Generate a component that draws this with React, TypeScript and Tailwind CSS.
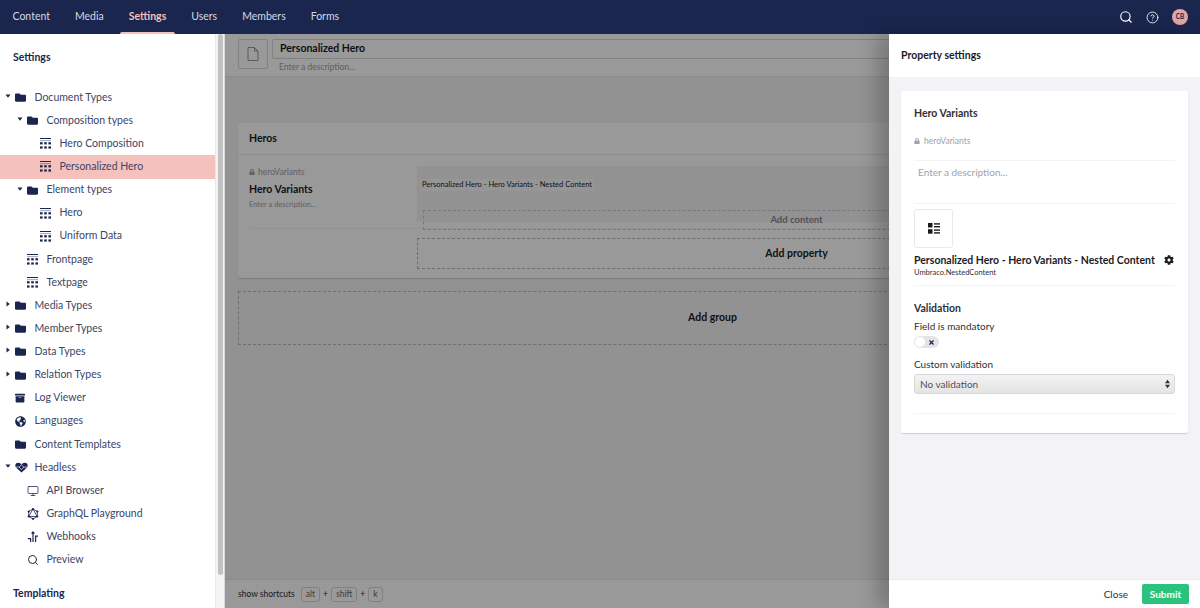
import React from "react";
import { Search, CircleHelp, Monitor, X } from "lucide-react";
import { FaFolder, FaGlobeAmericas, FaArchive, FaCog, FaLock } from "react-icons/fa";

const navItems = ["Content", "Media", "Settings", "Users", "Members", "Forms"];

function GridIcon() {
  return (
    <svg viewBox="0 0 11 11" className="w-[11px] h-[11px] shrink-0" fill="#1b264f">
      <rect x="0" y="0" width="11" height="1" />
      <rect x="0" y="2.4" width="11" height="0.7" opacity="0.6" />
      <rect x="0" y="4.2" width="2.6" height="2.2" />
      <rect x="4.2" y="4.2" width="2.6" height="2.2" />
      <rect x="8.4" y="4.2" width="2.6" height="2.2" />
      <rect x="0" y="8.4" width="2.6" height="2.2" />
      <rect x="4.2" y="8.4" width="2.6" height="2.2" />
      <rect x="8.4" y="8.4" width="2.6" height="2.2" />
    </svg>
  );
}

function Caret({ open }: { open: boolean }) {
  return (
    <svg viewBox="0 0 6 6" className="w-[6px] h-[6px] shrink-0" fill="#1b264f">
      {open ? <path d="M0.5 1.5h5L3 4.8z" /> : <path d="M1.5 0.5v5L4.8 3z" />}
    </svg>
  );
}

function HeartIcon() {
  return (
    <svg viewBox="0 0 14 12" className="w-[13px] h-[11px] shrink-0">
      <path d="M7 11.5 1 6C-.6 4 .4.8 3.4.8 5 .8 6.2 1.6 7 2.6 7.8 1.6 9 .8 10.6.8c3 0 4 3.2 2.4 5.2z" fill="#1b264f" />
      <path d="M1 5.5h3.4L7 3l2.6 2.5H13M4.4 5.5 7 8.4l2.6-2.9" stroke="#fff" strokeWidth="0.7" fill="none" />
    </svg>
  );
}

function GraphIcon() {
  return (
    <svg viewBox="0 0 12 12" className="w-[12px] h-[12px] shrink-0" fill="none" stroke="#1b264f" strokeWidth="0.8">
      <path d="M6 1 10.3 3.5V8.5L6 11 1.7 8.5V3.5z" />
      <path d="M6 1 10.3 8.5H1.7z" />
      <g fill="#1b264f" stroke="none">
        <circle cx="6" cy="1.2" r="1.1" />
        <circle cx="10.3" cy="3.5" r="1.1" />
        <circle cx="10.3" cy="8.5" r="1.1" />
        <circle cx="6" cy="10.8" r="1.1" />
        <circle cx="1.7" cy="8.5" r="1.1" />
        <circle cx="1.7" cy="3.5" r="1.1" />
      </g>
    </svg>
  );
}

function HookIcon() {
  return (
    <svg viewBox="0 0 12 12" className="w-[12px] h-[12px] shrink-0" fill="none" stroke="#1b264f" strokeWidth="1.2">
      <path d="M6 1v10M4.6 2.6 6 1l1.4 1.6" />
      <path d="M3.6 11V7.6H.8M8.6 11V5.2h2.4" />
    </svg>
  );
}

function Row({
  depth,
  icon,
  label,
  caret,
  active,
}: {
  depth: 0 | 1 | 2;
  icon: React.ReactNode;
  label: string;
  caret?: "open" | "closed";
  active?: boolean;
}) {
  const pad = depth === 0 ? "pl-[15px]" : depth === 1 ? "pl-[27px]" : "pl-[40px]";
  return (
    <div className={`relative flex items-center h-[23.13px] ${pad} ${active ? "bg-[#f5c1bc]" : ""}`}>
      {caret && (
        <span className={`absolute top-[7px] ${depth === 0 ? "left-[5px]" : "left-[17px]"}`}>
          <Caret open={caret === "open"} />
        </span>
      )}
      <span className="w-[19.5px] shrink-0 flex items-center">{icon}</span>
      <span className="text-[10.5px] text-[#3c4566]">{label}</span>
    </div>
  );
}

const folder = <FaFolder className="w-[11px] h-[11px] text-[#1b264f]" />;
const grid = <GridIcon />;

function Kbd({ children }: { children: React.ReactNode }) {
  return (
    <span className="h-[15px] px-[4px] flex items-center rounded-[3px] border border-[#d8d8dc] text-[8.5px] text-[#68676b]">
      {children}
    </span>
  );
}

export default function App() {
  return (
    <div className="relative w-[1200px] h-[608px] overflow-hidden flex flex-col bg-[#f3f3f5] font-['Lato','Open_Sans',sans-serif]">
      {/* Top bar */}
      <header className="h-[34px] shrink-0 bg-[#1b264f] flex items-center justify-between">
        <nav className="flex h-full">
          {navItems.map((item) => (
            <div
              key={item}
              className={`relative h-full flex items-center px-[12.5px] text-[10.5px] ${
                item === "Settings" ? "text-[#f5c1bc] font-bold" : "text-[#d6d8e0]"
              }`}
            >
              {item}
              {item === "Settings" && (
                <span className="absolute left-[4px] right-[4px] bottom-0 h-[2px] rounded-t-[2px] bg-[#f5c1bc]" />
              )}
            </div>
          ))}
        </nav>
        <div className="flex items-center gap-[13px] pr-[12px]">
          <Search className="w-[14px] h-[14px] text-white" strokeWidth={2} />
          <CircleHelp className="w-[13px] h-[13px] text-white" strokeWidth={1.6} />
          <span className="w-[16px] h-[16px] rounded-full bg-[#e0a8a4] text-[#1b264f] text-[6.5px] font-bold flex items-center justify-center">
            CB
          </span>
        </div>
      </header>

      <div className="flex-1 flex min-h-0">
        {/* Tree */}
        <aside className="w-[225px] shrink-0 bg-white flex overflow-hidden border-r border-[#d8d7d9]">
          <div className="w-[215px] shrink-0">
            <div className="pl-[13px] pt-[17px] pb-[22px] text-[10.5px] font-bold text-[#1b264f] leading-[13px]">
              Settings
            </div>
            <Row depth={0} caret="open" icon={folder} label="Document Types" />
            <Row depth={1} caret="open" icon={folder} label="Composition types" />
            <Row depth={2} icon={grid} label="Hero Composition" />
            <Row depth={2} icon={grid} label="Personalized Hero" active />
            <Row depth={1} caret="open" icon={folder} label="Element types" />
            <Row depth={2} icon={grid} label="Hero" />
            <Row depth={2} icon={grid} label="Uniform Data" />
            <Row depth={1} icon={grid} label="Frontpage" />
            <Row depth={1} icon={grid} label="Textpage" />
            <Row depth={0} caret="closed" icon={folder} label="Media Types" />
            <Row depth={0} caret="closed" icon={folder} label="Member Types" />
            <Row depth={0} caret="closed" icon={folder} label="Data Types" />
            <Row depth={0} caret="closed" icon={folder} label="Relation Types" />
            <Row depth={0} icon={<FaArchive className="w-[10px] h-[10px] text-[#1b264f]" />} label="Log Viewer" />
            <Row depth={0} icon={<FaGlobeAmericas className="w-[11px] h-[11px] text-[#1b264f]" />} label="Languages" />
            <Row depth={0} icon={folder} label="Content Templates" />
            <Row depth={0} caret="open" icon={<HeartIcon />} label="Headless" />
            <Row depth={1} icon={<Monitor className="w-[12px] h-[12px] text-[#1b264f]" strokeWidth={1.5} />} label="API Browser" />
            <Row depth={1} icon={<GraphIcon />} label="GraphQL Playground" />
            <Row depth={1} icon={<HookIcon />} label="Webhooks" />
            <Row depth={1} icon={<Search className="w-[12px] h-[12px] text-[#1b264f]" strokeWidth={2} />} label="Preview" />
            <div className="pl-[13px] pt-[15px] text-[10.5px] font-bold text-[#1b264f] leading-[13px]">Templating</div>
          </div>
          {/* Scrollbar */}
          <div className="flex-1 bg-[#f4f4f4] border-l border-[#e8e8e8] flex justify-center">
            <div className="w-[5px] h-[541px] rounded-[3px] bg-[#c2c2c2]" />
          </div>
        </aside>

        {/* Editor */}
        <main className="flex-1 min-w-0 flex flex-col">
          <div className="h-[43px] shrink-0 bg-white border-b border-[#e9e9eb] flex items-start gap-[4px] pl-[13px] pr-[13px] pt-[5px]">
            <div className="w-[30px] h-[30px] shrink-0 border border-[#d8d7d9] rounded-[2px] flex items-center justify-center">
              <svg viewBox="0 0 12 14" className="w-[12px] h-[14px]" fill="none" stroke="#8a8a8a" strokeWidth="0.9">
                <path d="M1 .5h6.5L11 4v9.5H1zM7.5.5V4H11" />
              </svg>
            </div>
            <div className="flex-1">
              <div className="h-[20px] border border-[#d8d7d9] rounded-[2px] flex items-center px-[7px] text-[10.5px] font-bold text-[#1b1b1f]">
                Personalized Hero
              </div>
              <div className="pl-[7px] pt-[2px] text-[8.5px] leading-[12px] text-[#a2a1a6]">Enter a description...</div>
            </div>
          </div>

          <div className="flex-1 px-[13px] pt-[46px]">
            <section className="bg-white rounded-[2px] shadow-[0_1px_1px_rgba(0,0,0,0.16)]">
              <div className="h-[32px] flex items-center px-[11px] border-b border-[#e9e9eb] text-[10.5px] font-bold text-[#1b1b1f]">
                Heros
              </div>
              <div className="px-[11px] pt-[11px]">
                <div className="flex pb-[6px] border-b border-[#f3f3f5]">
                  <div className="w-[168px] shrink-0">
                    <div className="flex items-center gap-[3px] text-[8.5px] text-[#a2a1a6] leading-[12px]">
                      <FaLock className="w-[6px] h-[6px]" />
                      <span>heroVariants</span>
                    </div>
                    <div className="pt-[5px] text-[10.5px] font-bold text-[#1b1b1f] leading-[13px]">Hero Variants</div>
                    <div className="pt-[3px] text-[7.5px] text-[#a2a1a6] leading-[11px]">Enter a description...</div>
                  </div>
                  <div className="flex-1 h-[56px] bg-[#f3f3f5] p-[3px]">
                    <span className="inline-block px-[2px] bg-white/60 text-[7.5px] leading-[12px] text-[#1b1b1f]">
                      Personalized Hero - Hero Variants - Nested Content
                    </span>
                    <div className="mt-[17px] mx-[3px] h-[20px] border border-dashed border-[#c9c9cd] flex items-center justify-center text-[9.5px] font-bold text-[#8a8a8f]">
                      Add content
                    </div>
                  </div>
                </div>
                <div className="flex pt-[9px] pb-[9px]">
                  <div className="w-[168px] shrink-0" />
                  <div className="flex-1 h-[31px] border border-dashed border-[#b8b8bc] flex items-center justify-center text-[10.5px] font-bold text-[#1b1b1f]">
                    Add property
                  </div>
                </div>
              </div>
            </section>
            <div className="mt-[13px] h-[54px] border border-dashed border-[#b8b8bc] flex items-center justify-center text-[10.5px] font-bold text-[#1b1b1f]">
              Add group
            </div>
          </div>

          <footer className="h-[29px] shrink-0 bg-white border-t border-[#e9e9eb] flex items-center gap-[3px] pl-[13px] text-[8.5px] text-[#303033]">
            <span className="mr-[3px]">show shortcuts</span>
            <Kbd>alt</Kbd>
            <span>+</span>
            <Kbd>shift</Kbd>
            <span>+</span>
            <Kbd>k</Kbd>
          </footer>
        </main>
      </div>

      {/* Modal backdrop */}
      <div className="absolute left-[225px] right-0 top-[34px] bottom-0 bg-black/40" />

      {/* Property settings panel */}
      <div className="absolute right-0 top-[34px] bottom-0 w-[311px] flex flex-col bg-[#f3f3f5] shadow-[-12px_0_18px_rgba(0,0,0,0.22)]">
        <div className="h-[43px] shrink-0 bg-white flex items-center px-[12px] text-[10.5px] font-bold text-[#1b1b1f]">
          Property settings
        </div>
        <div className="flex-1 px-[12px] pt-[14px]">
          <div className="h-[342px] bg-white rounded-[2px] shadow-[0_1px_1px_rgba(0,0,0,0.16)] px-[13px] pt-[16px]">
            <div className="text-[10.5px] font-bold text-[#303033] leading-[13px]">Hero Variants</div>
            <div className="mt-[15px] flex items-center gap-[4px] text-[8.5px] text-[#a2a1a6] leading-[12px]">
              <FaLock className="w-[6px] h-[6px]" />
              <span>heroVariants</span>
            </div>
            <div className="mt-[13px] h-[44px] border-y border-[#f3f3f5] pt-[5px] pl-[4px] text-[10px] text-[#a2a1a6] leading-[13px]">
              Enter a description...
            </div>
            <div className="mt-[5px] w-[39px] h-[39px] border border-[#e9e9eb] rounded-[3px] flex items-center justify-center">
              <svg viewBox="0 0 12 11" className="w-[12px] h-[11px]" fill="#1b1b1f">
                <rect x="0" y="0" width="4.5" height="4.5" />
                <rect x="6" y="0.2" width="6" height="1.4" />
                <rect x="6" y="3" width="6" height="1.4" />
                <rect x="0" y="6.2" width="4.5" height="4.5" />
                <rect x="6" y="6.4" width="6" height="1.4" />
                <rect x="6" y="9.2" width="6" height="1.4" />
              </svg>
            </div>
            <div className="mt-[6px] flex justify-between items-start h-[25px]">
              <div>
                <div className="text-[10.5px] font-bold text-[#1b1b1f] leading-[13px]">
                  Personalized Hero - Hero Variants - Nested Content
                </div>
                <div className="text-[7.5px] text-[#303033] leading-[11px]">Umbraco.NestedContent</div>
              </div>
              <FaCog className="w-[10px] h-[10px] mt-[1px] mr-[1px] text-[#1b1b1f]" />
            </div>
            <div className="mt-[6px] border-t border-[#f3f3f5] pt-[16px]">
              <div className="text-[10.5px] font-bold text-[#303033] leading-[13px]">Validation</div>
              <div className="mt-[5px] text-[10px] text-[#303033] leading-[13px]">Field is mandatory</div>
              <div className="mt-[3px] w-[25px] h-[12px] rounded-full bg-[#e4e4e8] flex items-center justify-between px-[1px]">
                <span className="w-[10px] h-[10px] rounded-full bg-white" />
                <X className="w-[7px] h-[7px] mr-[3px] text-[#1b264f]" strokeWidth={4} />
              </div>
              <div className="mt-[10px] text-[10px] text-[#303033] leading-[13px]">Custom validation</div>
              <div className="relative mt-[3px] h-[20px] rounded-[3px] border border-[#d8d7d9] bg-gradient-to-b from-[#f3f3f5] to-[#e4e4e4] flex items-center px-[5px] text-[10px] text-[#515054]">
                No validation
                <svg viewBox="0 0 6 10" className="absolute right-[4px] top-[4px] w-[5px] h-[10px]" fill="#303033">
                  <path d="M3 0 6 4H0zM3 10 0 6h6z" />
                </svg>
              </div>
              <div className="mt-[19px] border-t border-[#f3f3f5]" />
            </div>
          </div>
        </div>
        <div className="h-[29px] shrink-0 bg-white border-t border-[#e9e9eb] flex items-center justify-end gap-[14px] pr-[11px]">
          <span className="text-[10px] text-[#303033]">Close</span>
          <span className="h-[20px] w-[47px] rounded-[2px] bg-[#2bc37c] flex items-center justify-center text-[10px] font-bold text-white">
            Submit
          </span>
        </div>
      </div>
    </div>
  );
}
